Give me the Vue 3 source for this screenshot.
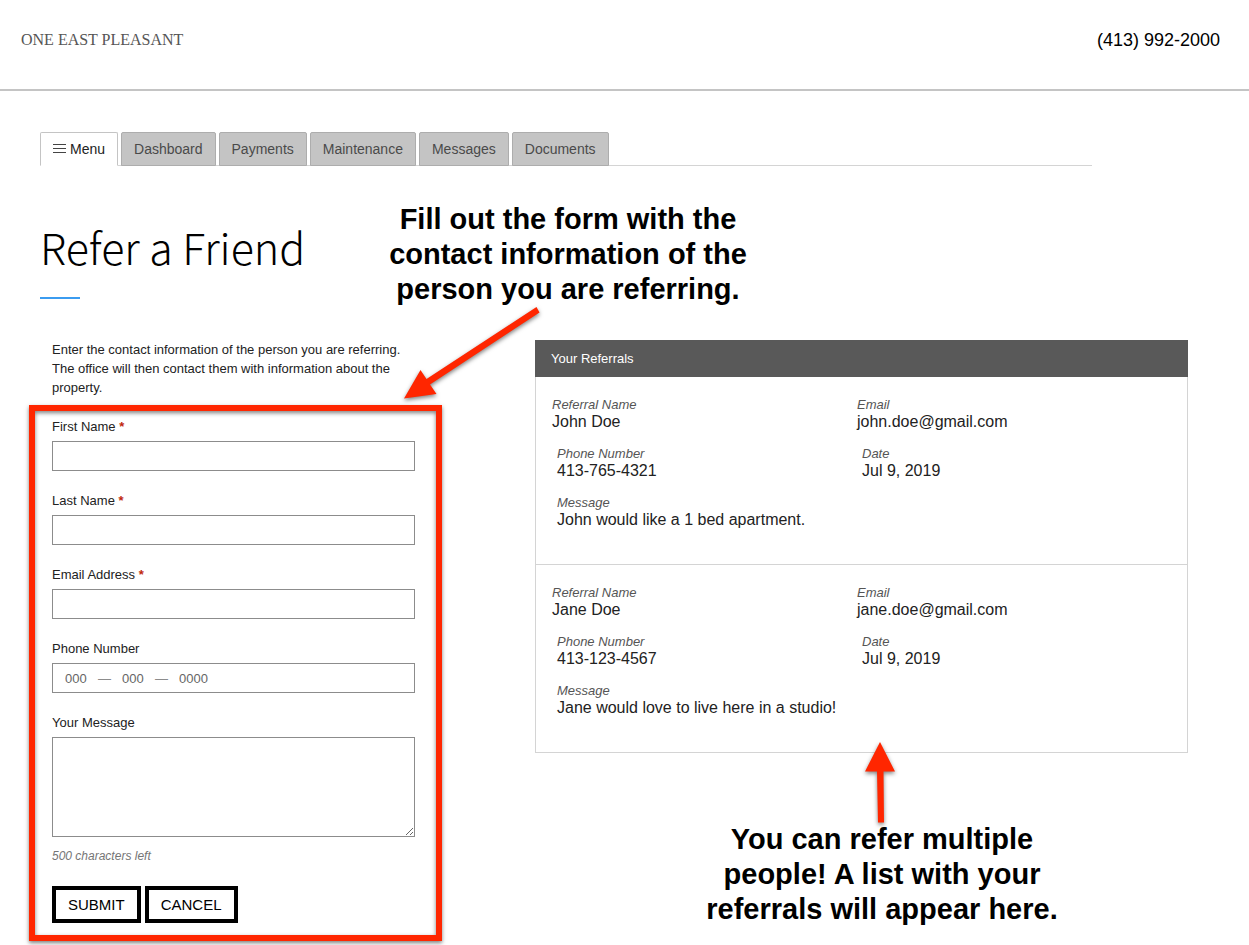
<script setup>
import { computed, ref } from 'vue'

const tabs = ['Dashboard', 'Payments', 'Maintenance', 'Messages', 'Documents']

const fields = [
  { id: 'first-name', label: 'First Name', type: 'text' },
  { id: 'last-name', label: 'Last Name', type: 'text' },
  { id: 'email', label: 'Email Address', type: 'email' },
]

const referrals = [
  {
    name: 'John Doe',
    email: 'john.doe@gmail.com',
    phone: '413-765-4321',
    date: 'Jul 9, 2019',
    message: 'John would like a 1 bed apartment.',
  },
  {
    name: 'Jane Doe',
    email: 'jane.doe@gmail.com',
    phone: '413-123-4567',
    date: 'Jul 9, 2019',
    message: 'Jane would love to live here in a studio!',
  },
]

const message = ref('')
const charactersLeft = computed(() => 500 - message.value.length)
</script>

<template>
  <div class="page">
    <header class="site-header">
      <a class="logo" href="#">ONE EAST PLEASANT</a>
      <a class="phone" href="tel:4139922000">(413) 992-2000</a>
    </header>

    <nav class="tabs">
      <a class="tab active" href="#">
        <svg class="menu-icon" viewBox="0 0 13 10" width="13" height="10" aria-hidden="true">
          <path d="M0 .5h13M0 4.5h13M0 8.5h13" stroke="#444" stroke-width="1" />
        </svg>
        <span>Menu</span>
      </a>
      <a v-for="tab in tabs" :key="tab" class="tab" href="#">{{ tab }}</a>
    </nav>

    <main>
      <h1>Refer a Friend</h1>

      <div class="columns">
        <section class="refer">
          <p class="intro">
            Enter the contact information of the person you are referring. The office will then
            contact them with information about the property.
          </p>
          <form class="form" @submit.prevent>
            <div v-for="field in fields" :key="field.id" class="field">
              <label :for="field.id">{{ field.label }} <span class="required">*</span></label>
              <input :id="field.id" class="box" :type="field.type" />
            </div>
            <div class="field">
              <label for="phone-area">Phone Number</label>
              <div class="box phone-box">
                <input id="phone-area" placeholder="000" maxlength="3" />
                <span class="dash">—</span>
                <input placeholder="000" maxlength="3" aria-label="Phone prefix" />
                <span class="dash">—</span>
                <input class="long" placeholder="0000" maxlength="4" aria-label="Phone line number" />
              </div>
            </div>
            <div class="field-message">
              <label for="message">Your Message</label>
              <textarea id="message" v-model="message" class="box" maxlength="500"></textarea>
            </div>
            <p class="count">{{ charactersLeft }} characters left</p>
            <div class="actions">
              <button type="submit">SUBMIT</button>
              <button type="button">CANCEL</button>
            </div>
          </form>
        </section>

        <section class="referrals">
          <h2>Your Referrals</h2>
          <article v-for="item in referrals" :key="item.name" class="referral">
            <dl class="row">
              <div><dt>Referral Name</dt><dd>{{ item.name }}</dd></div>
              <div><dt>Email</dt><dd>{{ item.email }}</dd></div>
            </dl>
            <dl class="row inset">
              <div><dt>Phone Number</dt><dd>{{ item.phone }}</dd></div>
              <div><dt>Date</dt><dd>{{ item.date }}</dd></div>
            </dl>
            <dl class="inset">
              <div><dt>Message</dt><dd>{{ item.message }}</dd></div>
            </dl>
          </article>
        </section>
      </div>
    </main>

    <p class="note note-form">Fill out the form with the<br />contact information of the<br />person you are referring.</p>
    <svg class="arrow arrow-form" viewBox="0 0 150 104" width="150" height="104" aria-hidden="true">
      <path d="M4 93.5 20.5 65 26.5 74 136.5 2 139.5 7.5 30 79.5 36.5 89z" fill="#ff2600" />
    </svg>

    <p class="note note-list">You can refer multiple<br />people! A list with your<br />referrals will appear here.</p>
    <svg class="arrow arrow-list" viewBox="0 0 40 90" width="40" height="90" aria-hidden="true">
      <path d="M20 2 35 31.5H23.5L24 82.5H18L17 31.5H5z" fill="#ff2600" />
    </svg>
  </div>
</template>

<style>
body {
  background: #fff;
}
</style>

<style scoped>
.page {
  position: relative;
  padding-bottom: 4px;
  font-family: "Liberation Sans", Arial, sans-serif;
  font-size: 13px;
  line-height: 19px;
  color: #222;
}

.page *,
.page {
  box-sizing: border-box;
}

a {
  color: inherit;
  text-decoration: none;
}

h1,
h2,
p,
dl,
dd {
  margin: 0;
}

.site-header {
  display: flex;
  justify-content: space-between;
  height: 91px;
  padding: 28px 29px 0 21px;
  border-bottom: 2px solid #c4c4c4;
  line-height: 24px;
}

.logo {
  font-family: "Liberation Serif", "Times New Roman", serif;
  font-size: 16px;
  color: #555;
}

.phone {
  font-size: 18px;
  color: #000;
}

.tabs {
  display: flex;
  gap: 3px;
  max-width: 1052px;
  margin: 41px 40px 0;
  border-bottom: 1px solid #d4d4d4;
}

.tab {
  display: flex;
  align-items: center;
  height: 34px;
  margin-bottom: -1px;
  padding: 0 12px;
  border: 1px solid #adadad;
  border-radius: 2px 2px 0 0;
  background: #c4c4c4;
  font-size: 14px;
  color: #4a4a4a;
}

.tab.active {
  gap: 4px;
  border-color: #c4c4c4;
  border-bottom-color: #fff;
  background: #fff;
  color: #222;
}

h1 {
  margin: 48px 40px 0;
  font-family: "Noto Sans CJK SC", "Open Sans", sans-serif;
  font-size: 43px;
  font-weight: 300;
  line-height: 64px;
  color: #000;
}

h1::after {
  content: "";
  display: block;
  width: 40px;
  height: 2px;
  margin-top: 19px;
  background: #3b9cf0;
}

.columns {
  display: grid;
  grid-template-columns: 413px minmax(0, 1fr);
  align-items: start;
  gap: 93px;
  margin: 41px 61px 0 29px;
}

.intro {
  padding: 0 27px 0 23px;
}

.form {
  margin-top: 8px;
  padding: 6px 21px 12px 17px;
  border: 6px solid #ff2600;
  box-shadow: 0 2px 4px rgba(0, 0, 0, 0.5), inset 0 2px 4px rgba(0, 0, 0, 0.5);
}

.field {
  margin-bottom: 20px;
}

label {
  display: block;
  margin-bottom: 5px;
}

.required {
  font-weight: 700;
  color: #c0280c;
}

.box {
  display: block;
  width: 100%;
  height: 30px;
  padding: 0 12px;
  border: 1px solid #8c8c8c;
  border-radius: 0;
  background: #fff;
  font: inherit;
}

textarea.box {
  height: 100px;
  resize: both;
}

.phone-box {
  display: flex;
  align-items: center;
  gap: 11px;
}

.phone-box input {
  width: 22px;
  padding: 0;
  border: 0;
  background: none;
  font: inherit;
}

.phone-box .long {
  width: 32px;
}

.phone-box input::placeholder {
  color: #666;
}

.dash {
  color: #8c8c8c;
}

.count {
  margin-top: 10px;
  font-size: 12px;
  font-style: italic;
  color: #757575;
}

.actions {
  display: flex;
  gap: 4px;
  margin-top: 20px;
}

button {
  height: 37px;
  padding: 0 12px;
  border: 4px solid #000;
  background: #fff;
  font: inherit;
  font-size: 15px;
  color: #000;
}

h2 {
  padding: 9px 16px;
  background: #595959;
  font-size: 13px;
  font-weight: 400;
  color: #fff;
}

.referral {
  padding: 20px 25px 35px 16px;
  border: 1px solid #d4d4d4;
  border-top: 0;
}

.row {
  display: grid;
  grid-template-columns: 1fr 1fr;
  margin-bottom: 15px;
}

.inset {
  margin-left: 5px;
  margin-right: -5px;
}

dt {
  font-style: italic;
  line-height: 15px;
  color: #555;
}

dd {
  padding-top: 1px;
  font-size: 16px;
  line-height: 18px;
}

.note {
  position: absolute;
  width: 400px;
  font-size: 29px;
  font-weight: 700;
  line-height: 35px;
  text-align: center;
  color: #000;
}

.note-form {
  top: 202px;
  left: 368px;
}

.note-list {
  top: 822px;
  left: 682px;
}

.arrow {
  position: absolute;
  filter: drop-shadow(0 2px 2px rgba(0, 0, 0, 0.5));
}

.arrow-form {
  top: 305px;
  left: 400px;
}

.arrow-list {
  top: 740px;
  left: 860px;
}
</style>
